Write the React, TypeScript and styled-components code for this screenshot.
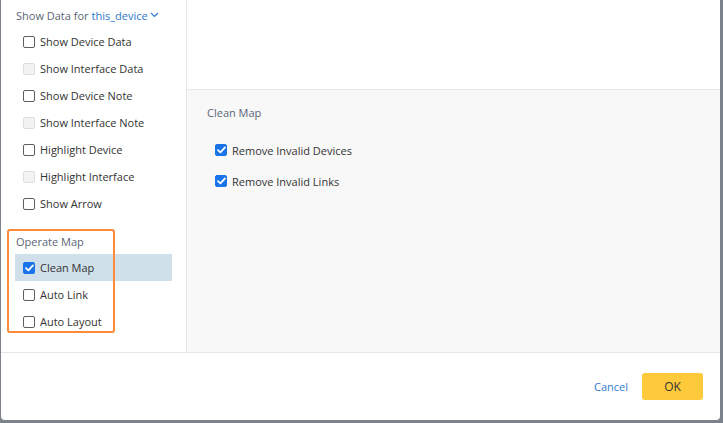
import React from 'react'
import styled, { createGlobalStyle } from 'styled-components'

const GlobalStyle = createGlobalStyle`
  html, body {
    margin: 0;
    padding: 0;
    background: #7b828c;
  }
  body {
    font-family: "Open Sans", "Liberation Sans", sans-serif;
    font-size: 11px;
    color: #333;
  }
`

const Page = styled.div`
  width: 723px;
  height: 423px;
  padding-left: 1px;
  box-sizing: border-box;
  background: #7b828c;
  overflow: hidden;
`

const Dialog = styled.div`
  width: 719px;
  height: 420px;
  background: #fff;
  border-radius: 0 0 4px 4px;
  display: flex;
  flex-direction: column;
`

const Body = styled.div`
  display: flex;
  flex-direction: row;
  height: 352px;
  border-bottom: 1px solid #e6e6e6;
`

const Sidebar = styled.div`
  position: relative;
  width: 186px;
  border-right: 1px solid #e6e6e6;
  padding-top: 6px;
  box-sizing: border-box;
`

const SectionTitle = styled.div`
  display: flex;
  align-items: center;
  height: 18px;
  padding-left: 15px;
  color: #5c6576;
`

const Device = styled.span`
  color: #2b78cc;
  margin-left: 3px;
`

const List = styled.div<{ $top?: number }>`
  display: flex;
  flex-direction: column;
  margin-top: ${props => props.$top ?? 4}px;
`

const Row = styled.div<{ $active?: boolean }>`
  display: flex;
  align-items: center;
  gap: 5px;
  height: 27px;
  margin: 0 14px;
  padding-left: 8px;
  background: ${props => (props.$active ? '#cfe0ea' : 'transparent')};
`

const Box = styled.span<{ $checked?: boolean; $disabled?: boolean }>`
  width: 12px;
  height: 12px;
  box-sizing: border-box;
  border-radius: 2px;
  display: inline-flex;
  align-items: center;
  justify-content: center;
  flex-shrink: 0;
  border: 1px solid
    ${props => (props.$checked ? '#1a73e8' : props.$disabled ? '#dedede' : '#5f5f5f')};
  background: ${props => (props.$checked ? '#1a73e8' : props.$disabled ? '#f3f3f3' : '#fff')};
`

const Group = styled.div`
  margin-top: 15px;
`

const Highlight = styled.div`
  position: absolute;
  left: 6px;
  top: 229px;
  width: 108px;
  height: 104px;
  box-sizing: border-box;
  border: 2px solid #ff8a3a;
  border-radius: 3px;
  pointer-events: none;
`

const Main = styled.div`
  flex: 1;
  display: flex;
  flex-direction: column;
`

const TopArea = styled.div`
  height: 89px;
  border-bottom: 1px solid #e8e8e8;
`

const Content = styled.div`
  flex: 1;
  background: #f8f8f8;
  padding: 14px 0 0 20px;
`

const ContentTitle = styled.div`
  height: 18px;
  line-height: 18px;
  color: #5c6576;
`

const Options = styled.div`
  display: flex;
  flex-direction: column;
  gap: 13px;
  margin-top: 19px;
  padding-left: 8px;
`

const Option = styled.div`
  display: flex;
  align-items: center;
  gap: 5px;
  height: 18px;
`

const Footer = styled.div`
  flex: 1;
  display: flex;
  align-items: center;
  justify-content: flex-end;
  gap: 14px;
  padding-right: 17px;
`

const CancelLink = styled.span`
  color: #2e7bcf;
  font-size: 11px;
  cursor: pointer;
`

const OkButton = styled.button`
  width: 61px;
  height: 27px;
  border: none;
  border-radius: 3px;
  background: #ffc93c;
  color: #333;
  font-family: inherit;
  font-size: 12px;
  cursor: pointer;
`

const Check = () => (
  <svg width="9" height="8" viewBox="0 0 9 8">
    <path d="M1 4.2 L3.4 6.4 L8 1.4" stroke="#fff" strokeWidth="1.8" fill="none" strokeLinecap="round" strokeLinejoin="round" />
  </svg>
)

const Chevron = () => (
  <svg width="9" height="6" viewBox="0 0 9 6" style={{ marginLeft: 2 }}>
    <path d="M1 1 L4.5 4.5 L8 1" stroke="#2b78cc" strokeWidth="1.2" fill="none" />
  </svg>
)

const Checkbox = ({ checked, disabled }: { checked?: boolean; disabled?: boolean }) => (
  <Box $checked={checked} $disabled={disabled}>
    {checked ? <Check /> : null}
  </Box>
)

const showItems = [
  { label: 'Show Device Data' },
  { label: 'Show Interface Data', disabled: true },
  { label: 'Show Device Note' },
  { label: 'Show Interface Note', disabled: true },
  { label: 'Highlight Device' },
  { label: 'Highlight Interface', disabled: true },
  { label: 'Show Arrow' },
]

const operateItems = [
  { label: 'Clean Map', checked: true },
  { label: 'Auto Link' },
  { label: 'Auto Layout' },
]

const App = () => {
  return (
    <>
      <GlobalStyle />
      <Page>
        <Dialog>
          <Body>
            <Sidebar>
              <SectionTitle>
                Show Data for<Device>this_device</Device>
                <Chevron />
              </SectionTitle>
              <List>
                {showItems.map(item => (
                  <Row key={item.label}>
                    <Checkbox disabled={item.disabled} />
                    {item.label}
                  </Row>
                ))}
              </List>
              <Group>
                <SectionTitle>Operate Map</SectionTitle>
                <List $top={4}>
                  {operateItems.map(item => (
                    <Row key={item.label} $active={item.checked}>
                      <Checkbox checked={item.checked} />
                      {item.label}
                    </Row>
                  ))}
                </List>
              </Group>
              <Highlight />
            </Sidebar>
            <Main>
              <TopArea />
              <Content>
                <ContentTitle>Clean Map</ContentTitle>
                <Options>
                  <Option>
                    <Checkbox checked />
                    Remove Invalid Devices
                  </Option>
                  <Option>
                    <Checkbox checked />
                    Remove Invalid Links
                  </Option>
                </Options>
              </Content>
            </Main>
          </Body>
          <Footer>
            <CancelLink>Cancel</CancelLink>
            <OkButton>OK</OkButton>
          </Footer>
        </Dialog>
      </Page>
    </>
  )
}

export default App
